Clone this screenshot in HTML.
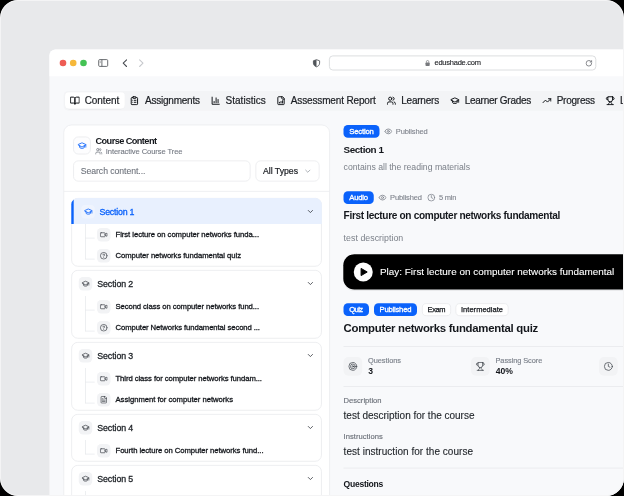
<!DOCTYPE html>
<html lang="en"><head><meta charset="utf-8"><title>Edushade course content</title><style>
html,body{margin:0;padding:0;background:#000;}
body{width:624px;height:496px;overflow:hidden;font-family:"Liberation Sans",sans-serif;}
.a{position:absolute;display:block}
.t{position:absolute;white-space:nowrap;line-height:0;}
#f{position:relative;will-change:transform;width:624px;height:496px;overflow:hidden;border-radius:18px;background:#e8e9eb;}
</style></head>
<body>
<div id="f">
<svg class="a" style="left:0;top:0" width="624" height="496" viewBox="0 0 624 496">
<path d="M49.4 500V55.5a6 6 0 0 1 6-6H640V500z" fill="#f8f9fb"/>
<path d="M49.4 76.2V55.5a6 6 0 0 1 6-6H640V76.2z" fill="#fff"/>
<circle cx="63.0" cy="63" r="3.3" fill="#ee5c54"/>
<circle cx="73.2" cy="63" r="3.3" fill="#f6b83a"/>
<circle cx="83.5" cy="63" r="3.3" fill="#44c254"/>
<g fill="none" stroke="#505459" stroke-width="0.85"><rect x="98.7" y="59.6" width="9" height="6.8" rx="1"/><path d="M101.9 59.6v6.8"/><path d="M99.7 61.3h1.1M99.7 62.6h1.1" stroke-width="0.5"/></g>
<path d="M126.6 59.9 123.2 63.2l3.4 3.3" fill="none" stroke="#45494f" stroke-width="1.05" stroke-linecap="round" stroke-linejoin="round"/>
<path d="M139.6 59.9 143 63.2l-3.4 3.3" fill="none" stroke="#c6c8cc" stroke-width="1.05" stroke-linecap="round" stroke-linejoin="round"/>
<g transform="translate(312.9,59.2)"><path d="M3.6 0.5 6.7 1.6v2.3c0 1.9-1.3 3.1-3.1 3.7C1.8 7 0.5 5.8 0.5 3.9V1.6z" fill="none" stroke="#505459" stroke-width="0.85"/><path d="M3.6 0.5v7.1C1.8 7 0.5 5.8 0.5 3.9V1.6z" fill="#505459"/></g>
<rect x="329.40" y="55.90" width="266.40" height="14.10" rx="3.40" fill="#fff" stroke="#d3d5d8" stroke-width="0.8"/>
<g transform="translate(425.4,59.9)"><rect x="0.1" y="2.6" width="4.2" height="3.5" rx="0.7" fill="#77797d"/><path d="M1 2.8V1.8a1.2 1.2 0 0 1 2.4 0v1" fill="none" stroke="#77797d" stroke-width="0.7"/></g>
<svg x="585.2" y="59.6" width="7.4" height="7.4" viewBox="0 0 24 24" fill="none" stroke="#63666b" stroke-width="2.4" stroke-linecap="round" stroke-linejoin="round"><path d="M21 12a9 9 0 1 1-9-9c2.5 0 4.9 1 6.7 2.7L21 8"/><path d="M21 3v5h-5"/></svg>
<rect x="63.60" y="90.90" width="576.40" height="19.80" rx="5" fill="#f3f4f6"/>
<rect x="64.90" y="92.60" width="60.00" height="16.80" rx="4.5" fill="rgba(0,0,0,.05)"/>
<rect x="65.00" y="92.20" width="59.80" height="16.60" rx="4" fill="#fff"/>
<svg x="70.15" y="95.95" width="9.5" height="9.5" viewBox="0 0 24 24" fill="none" stroke="#111418" stroke-width="2.5" stroke-linecap="round" stroke-linejoin="round"><path d="M2 3h6a4 4 0 0 1 4 4v14a3 3 0 0 0-3-3H2z"/><path d="M22 3h-6a4 4 0 0 0-4 4v14a3 3 0 0 1 3-3h7z"/></svg>
<svg x="129.65" y="95.95" width="9.5" height="9.5" viewBox="0 0 24 24" fill="none" stroke="#111418" stroke-width="2.5" stroke-linecap="round" stroke-linejoin="round"><rect width="8" height="4" x="8" y="2" rx="1" ry="1"/><path d="M16 4h2a2 2 0 0 1 2 2v14a2 2 0 0 1-2 2H6a2 2 0 0 1-2-2V6a2 2 0 0 1 2-2h2"/><path d="M12 11h4"/><path d="M12 16h4"/><path d="M8 11h.01"/><path d="M8 16h.01"/></svg>
<svg x="210.95" y="95.95" width="9.5" height="9.5" viewBox="0 0 24 24" fill="none" stroke="#111418" stroke-width="2.5" stroke-linecap="round" stroke-linejoin="round"><path d="M3 3v18h18"/><path d="M18 17V9"/><path d="M13 17V5"/><path d="M8 17v-3"/></svg>
<svg x="276.25" y="95.95" width="9.5" height="9.5" viewBox="0 0 24 24" fill="none" stroke="#111418" stroke-width="2.5" stroke-linecap="round" stroke-linejoin="round"><path d="M15 2H6a2 2 0 0 0-2 2v16a2 2 0 0 0 2 2h12a2 2 0 0 0 2-2V7Z"/><path d="M14 2v4a2 2 0 0 0 2 2h4"/><path d="M8 18v-2"/><path d="M12 18v-4"/><path d="M16 18v-6"/></svg>
<svg x="386.65" y="95.95" width="9.5" height="9.5" viewBox="0 0 24 24" fill="none" stroke="#111418" stroke-width="2.5" stroke-linecap="round" stroke-linejoin="round"><path d="M16 21v-2a4 4 0 0 0-4-4H6a4 4 0 0 0-4 4v2"/><circle cx="9" cy="7" r="4"/><path d="M22 21v-2a4 4 0 0 0-3-3.87"/><path d="M16 3.13a4 4 0 0 1 0 7.75"/></svg>
<svg x="450.05" y="95.95" width="9.5" height="9.5" viewBox="0 0 24 24" fill="none" stroke="#111418" stroke-width="2.5" stroke-linecap="round" stroke-linejoin="round"><path d="M21.42 10.922a1 1 0 0 0-.019-1.838L12.83 5.18a2 2 0 0 0-1.66 0L2.6 9.08a1 1 0 0 0 0 1.832l8.57 3.908a2 2 0 0 0 1.66 0z"/><path d="M22 10v6"/><path d="M6 12.5V16a6 3 0 0 0 12 0v-3.5"/></svg>
<svg x="542.15" y="95.95" width="9.5" height="9.5" viewBox="0 0 24 24" fill="none" stroke="#111418" stroke-width="2.5" stroke-linecap="round" stroke-linejoin="round"><polyline points="22 7 13.5 15.5 8.5 10.5 2 17"/><polyline points="16 7 22 7 22 13"/></svg>
<svg x="605.45" y="95.95" width="9.5" height="9.5" viewBox="0 0 24 24" fill="none" stroke="#111418" stroke-width="2.5" stroke-linecap="round" stroke-linejoin="round"><path d="M6 9H4.5a2.5 2.5 0 0 1 0-5H6"/><path d="M18 9h1.5a2.5 2.5 0 0 0 0-5H18"/><path d="M4 22h16"/><path d="M10 14.66V17c0 .55-.47.98-.97 1.21C7.85 18.75 7 20.24 7 22"/><path d="M14 14.66V17c0 .55.47.98.97 1.21C16.15 18.75 17 20.24 17 22"/><path d="M18 2H6v7a6 6 0 0 0 12 0V2Z"/></svg>
<rect x="63.75" y="125.00" width="265.80" height="394.65" rx="7.65" fill="#fff" stroke="#e8eaed" stroke-width="0.7"/>
<rect x="73.55" y="136.95" width="16.90" height="17.10" rx="4.65" fill="#fdfdfe" stroke="#e5e7ea" stroke-width="0.7"/>
<svg x="77.30" y="140.90" width="9.4" height="9.4" viewBox="0 0 24 24" fill="none" stroke="#0a62fb" stroke-width="2.2" stroke-linecap="round" stroke-linejoin="round"><path d="M21.42 10.922a1 1 0 0 0-.019-1.838L12.83 5.18a2 2 0 0 0-1.66 0L2.6 9.08a1 1 0 0 0 0 1.832l8.57 3.908a2 2 0 0 0 1.66 0z"/><path d="M22 10v6"/><path d="M6 12.5V16a6 3 0 0 0 12 0v-3.5"/></svg>
<svg x="95.10" y="147.50" width="7.4" height="7.4" viewBox="0 0 24 24" fill="none" stroke="#737881" stroke-width="2.4" stroke-linecap="round" stroke-linejoin="round"><path d="M16 21v-2a4 4 0 0 0-4-4H6a4 4 0 0 0-4 4v2"/><circle cx="9" cy="7" r="4"/><path d="M22 21v-2a4 4 0 0 0-3-3.87"/><path d="M16 3.13a4 4 0 0 1 0 7.75"/></svg>
<rect x="73.55" y="160.85" width="176.60" height="20.30" rx="4.65" fill="#fff" stroke="#e5e7ea" stroke-width="0.7"/>
<rect x="255.85" y="160.85" width="63.30" height="20.30" rx="4.65" fill="#fff" stroke="#e5e7ea" stroke-width="0.7"/>
<svg x="303.55" y="166.95" width="8.5" height="8.5" viewBox="0 0 24 24" fill="none" stroke="#8b9099" stroke-width="2" stroke-linecap="round" stroke-linejoin="round"><path d="m6 9 6 6 6-6"/></svg>
<rect x="63.80" y="190.90" width="265.70" height="0.70" rx="0" fill="#e8eaed"/>
<rect x="71.65" y="198.35" width="249.80" height="67.90" rx="6.15" fill="#fff" stroke="#e5e7ea" stroke-width="0.7"/>
<path d="M71.3 224V204.5a6.5 6.5 0 0 1 6.5-6.5H315.3a6.5 6.5 0 0 1 6.5 6.5V224z" fill="#e8f0fe"/>
<path d="M71.3 224V204.5a6.5 6.5 0 0 1 2.4-5v24.5z" fill="#0a62fb"/>
<rect x="81.20" y="204.90" width="13.60" height="13.60" rx="4" fill="rgba(255,255,255,.3)"/>
<svg x="83.85" y="207.15" width="8.9" height="8.9" viewBox="0 0 24 24" fill="none" stroke="#0a62fb" stroke-width="2.2" stroke-linecap="round" stroke-linejoin="round"><path d="M21.42 10.922a1 1 0 0 0-.019-1.838L12.83 5.18a2 2 0 0 0-1.66 0L2.6 9.08a1 1 0 0 0 0 1.832l8.57 3.908a2 2 0 0 0 1.66 0z"/><path d="M22 10v6"/><path d="M6 12.5V16a6 3 0 0 0 12 0v-3.5"/></svg>
<svg x="306.15" y="207.25" width="8.5" height="8.5" viewBox="0 0 24 24" fill="none" stroke="#30343a" stroke-width="2.2" stroke-linecap="round" stroke-linejoin="round"><path d="m6 9 6 6 6-6"/></svg>
<rect x="85.20" y="224.00" width="0.65" height="35.35" rx="0" fill="#e4e6ea"/>
<rect x="85.20" y="237.75" width="9.50" height="0.65" rx="0" fill="#e4e6ea"/>
<rect x="97.00" y="228.00" width="13.50" height="13.50" rx="4.2" fill="#f2f3f5"/>
<svg x="99.75" y="230.75" width="8" height="8" viewBox="0 0 24 24" fill="none" stroke="#3f444b" stroke-width="2.1" stroke-linecap="round" stroke-linejoin="round"><path d="m16 13 5.223 3.482a.5.5 0 0 0 .777-.416V7.87a.5.5 0 0 0-.752-.432L16 10.5"/><rect x="2" y="6" width="14" height="12" rx="2"/></svg>
<rect x="85.20" y="258.75" width="9.50" height="0.65" rx="0" fill="#e4e6ea"/>
<rect x="97.00" y="249.00" width="13.50" height="13.50" rx="4.2" fill="#f2f3f5"/>
<svg x="99.75" y="251.75" width="8" height="8" viewBox="0 0 24 24" fill="none" stroke="#3f444b" stroke-width="2.1" stroke-linecap="round" stroke-linejoin="round"><circle cx="12" cy="12" r="10"/><path d="M9.09 9a3 3 0 0 1 5.83 1c0 2-3 3-3 3"/><path d="M12 17h.01"/></svg>
<rect x="71.65" y="270.35" width="249.80" height="67.90" rx="6.15" fill="#fff" stroke="#e5e7ea" stroke-width="0.7"/>
<rect x="78.75" y="276.95" width="13.50" height="13.50" rx="4.2" fill="#f2f3f5"/>
<svg x="81.35" y="279.55" width="8.3" height="8.3" viewBox="0 0 24 24" fill="none" stroke="#3a3e45" stroke-width="2.1" stroke-linecap="round" stroke-linejoin="round"><path d="M21.42 10.922a1 1 0 0 0-.019-1.838L12.83 5.18a2 2 0 0 0-1.66 0L2.6 9.08a1 1 0 0 0 0 1.832l8.57 3.908a2 2 0 0 0 1.66 0z"/><path d="M22 10v6"/><path d="M6 12.5V16a6 3 0 0 0 12 0v-3.5"/></svg>
<svg x="306.15" y="279.25" width="8.5" height="8.5" viewBox="0 0 24 24" fill="none" stroke="#30343a" stroke-width="2.2" stroke-linecap="round" stroke-linejoin="round"><path d="m6 9 6 6 6-6"/></svg>
<rect x="85.20" y="296.00" width="0.65" height="35.35" rx="0" fill="#e4e6ea"/>
<rect x="85.20" y="309.75" width="9.50" height="0.65" rx="0" fill="#e4e6ea"/>
<rect x="97.00" y="300.00" width="13.50" height="13.50" rx="4.2" fill="#f2f3f5"/>
<svg x="99.75" y="302.75" width="8" height="8" viewBox="0 0 24 24" fill="none" stroke="#3f444b" stroke-width="2.1" stroke-linecap="round" stroke-linejoin="round"><path d="m16 13 5.223 3.482a.5.5 0 0 0 .777-.416V7.87a.5.5 0 0 0-.752-.432L16 10.5"/><rect x="2" y="6" width="14" height="12" rx="2"/></svg>
<rect x="85.20" y="330.75" width="9.50" height="0.65" rx="0" fill="#e4e6ea"/>
<rect x="97.00" y="321.00" width="13.50" height="13.50" rx="4.2" fill="#f2f3f5"/>
<svg x="99.75" y="323.75" width="8" height="8" viewBox="0 0 24 24" fill="none" stroke="#3f444b" stroke-width="2.1" stroke-linecap="round" stroke-linejoin="round"><circle cx="12" cy="12" r="10"/><path d="M9.09 9a3 3 0 0 1 5.83 1c0 2-3 3-3 3"/><path d="M12 17h.01"/></svg>
<rect x="71.65" y="342.35" width="249.80" height="67.90" rx="6.15" fill="#fff" stroke="#e5e7ea" stroke-width="0.7"/>
<rect x="78.75" y="348.95" width="13.50" height="13.50" rx="4.2" fill="#f2f3f5"/>
<svg x="81.35" y="351.55" width="8.3" height="8.3" viewBox="0 0 24 24" fill="none" stroke="#3a3e45" stroke-width="2.1" stroke-linecap="round" stroke-linejoin="round"><path d="M21.42 10.922a1 1 0 0 0-.019-1.838L12.83 5.18a2 2 0 0 0-1.66 0L2.6 9.08a1 1 0 0 0 0 1.832l8.57 3.908a2 2 0 0 0 1.66 0z"/><path d="M22 10v6"/><path d="M6 12.5V16a6 3 0 0 0 12 0v-3.5"/></svg>
<svg x="306.15" y="351.25" width="8.5" height="8.5" viewBox="0 0 24 24" fill="none" stroke="#30343a" stroke-width="2.2" stroke-linecap="round" stroke-linejoin="round"><path d="m6 9 6 6 6-6"/></svg>
<rect x="85.20" y="368.00" width="0.65" height="35.35" rx="0" fill="#e4e6ea"/>
<rect x="85.20" y="381.75" width="9.50" height="0.65" rx="0" fill="#e4e6ea"/>
<rect x="97.00" y="372.00" width="13.50" height="13.50" rx="4.2" fill="#f2f3f5"/>
<svg x="99.75" y="374.75" width="8" height="8" viewBox="0 0 24 24" fill="none" stroke="#3f444b" stroke-width="2.1" stroke-linecap="round" stroke-linejoin="round"><path d="m16 13 5.223 3.482a.5.5 0 0 0 .777-.416V7.87a.5.5 0 0 0-.752-.432L16 10.5"/><rect x="2" y="6" width="14" height="12" rx="2"/></svg>
<rect x="85.20" y="402.75" width="9.50" height="0.65" rx="0" fill="#e4e6ea"/>
<rect x="97.00" y="393.00" width="13.50" height="13.50" rx="4.2" fill="#f2f3f5"/>
<svg x="99.75" y="395.75" width="8" height="8" viewBox="0 0 24 24" fill="none" stroke="#3f444b" stroke-width="2.1" stroke-linecap="round" stroke-linejoin="round"><path d="M15 2H6a2 2 0 0 0-2 2v16a2 2 0 0 0 2 2h12a2 2 0 0 0 2-2V7Z"/><path d="M14 2v4a2 2 0 0 0 2 2h4"/><path d="M10 9H8"/><path d="M16 13H8"/><path d="M16 17H8"/></svg>
<rect x="71.65" y="414.35" width="249.80" height="46.90" rx="6.15" fill="#fff" stroke="#e5e7ea" stroke-width="0.7"/>
<rect x="78.75" y="420.95" width="13.50" height="13.50" rx="4.2" fill="#f2f3f5"/>
<svg x="81.35" y="423.55" width="8.3" height="8.3" viewBox="0 0 24 24" fill="none" stroke="#3a3e45" stroke-width="2.1" stroke-linecap="round" stroke-linejoin="round"><path d="M21.42 10.922a1 1 0 0 0-.019-1.838L12.83 5.18a2 2 0 0 0-1.66 0L2.6 9.08a1 1 0 0 0 0 1.832l8.57 3.908a2 2 0 0 0 1.66 0z"/><path d="M22 10v6"/><path d="M6 12.5V16a6 3 0 0 0 12 0v-3.5"/></svg>
<svg x="306.15" y="423.25" width="8.5" height="8.5" viewBox="0 0 24 24" fill="none" stroke="#30343a" stroke-width="2.2" stroke-linecap="round" stroke-linejoin="round"><path d="m6 9 6 6 6-6"/></svg>
<rect x="85.20" y="440.00" width="0.65" height="14.35" rx="0" fill="#e4e6ea"/>
<rect x="85.20" y="453.75" width="9.50" height="0.65" rx="0" fill="#e4e6ea"/>
<rect x="97.00" y="444.00" width="13.50" height="13.50" rx="4.2" fill="#f2f3f5"/>
<svg x="99.75" y="446.75" width="8" height="8" viewBox="0 0 24 24" fill="none" stroke="#3f444b" stroke-width="2.1" stroke-linecap="round" stroke-linejoin="round"><path d="m16 13 5.223 3.482a.5.5 0 0 0 .777-.416V7.87a.5.5 0 0 0-.752-.432L16 10.5"/><rect x="2" y="6" width="14" height="12" rx="2"/></svg>
<rect x="71.65" y="465.35" width="249.80" height="67.90" rx="6.15" fill="#fff" stroke="#e5e7ea" stroke-width="0.7"/>
<rect x="78.75" y="471.95" width="13.50" height="13.50" rx="4.2" fill="#f2f3f5"/>
<svg x="81.35" y="474.55" width="8.3" height="8.3" viewBox="0 0 24 24" fill="none" stroke="#3a3e45" stroke-width="2.1" stroke-linecap="round" stroke-linejoin="round"><path d="M21.42 10.922a1 1 0 0 0-.019-1.838L12.83 5.18a2 2 0 0 0-1.66 0L2.6 9.08a1 1 0 0 0 0 1.832l8.57 3.908a2 2 0 0 0 1.66 0z"/><path d="M22 10v6"/><path d="M6 12.5V16a6 3 0 0 0 12 0v-3.5"/></svg>
<svg x="306.15" y="474.25" width="8.5" height="8.5" viewBox="0 0 24 24" fill="none" stroke="#30343a" stroke-width="2.2" stroke-linecap="round" stroke-linejoin="round"><path d="m6 9 6 6 6-6"/></svg>
<rect x="85.20" y="491.00" width="0.65" height="35.35" rx="0" fill="#e4e6ea"/>
<rect x="85.20" y="504.75" width="9.50" height="0.65" rx="0" fill="#e4e6ea"/>
<rect x="97.00" y="495.00" width="13.50" height="13.50" rx="4.2" fill="#f2f3f5"/>
<svg x="99.75" y="497.75" width="8" height="8" viewBox="0 0 24 24" fill="none" stroke="#3f444b" stroke-width="2.1" stroke-linecap="round" stroke-linejoin="round"><path d="m16 13 5.223 3.482a.5.5 0 0 0 .777-.416V7.87a.5.5 0 0 0-.752-.432L16 10.5"/><rect x="2" y="6" width="14" height="12" rx="2"/></svg>
<rect x="85.20" y="525.75" width="9.50" height="0.65" rx="0" fill="#e4e6ea"/>
<rect x="97.00" y="516.00" width="13.50" height="13.50" rx="4.2" fill="#f2f3f5"/>
<svg x="99.75" y="518.75" width="8" height="8" viewBox="0 0 24 24" fill="none" stroke="#3f444b" stroke-width="2.1" stroke-linecap="round" stroke-linejoin="round"><circle cx="12" cy="12" r="10"/><path d="M9.09 9a3 3 0 0 1 5.83 1c0 2-3 3-3 3"/><path d="M12 17h.01"/></svg>
<rect x="343.50" y="125.00" width="36.00" height="12.80" rx="4.4" fill="#0a62fb"/>
<svg x="384.20" y="127.30" width="8.2" height="8.2" viewBox="0 0 24 24" fill="none" stroke="#7a7f88" stroke-width="2.3" stroke-linecap="round" stroke-linejoin="round"><path d="M2.062 12.348a1 1 0 0 1 0-.696 10.75 10.75 0 0 1 19.876 0 1 1 0 0 1 0 .696 10.75 10.75 0 0 1-19.876 0"/><circle cx="12" cy="12" r="3"/></svg>
<rect x="343.50" y="191.25" width="30.25" height="12.80" rx="4.4" fill="#0a62fb"/>
<svg x="378.40" y="193.50" width="8.2" height="8.2" viewBox="0 0 24 24" fill="none" stroke="#7a7f88" stroke-width="2.3" stroke-linecap="round" stroke-linejoin="round"><path d="M2.062 12.348a1 1 0 0 1 0-.696 10.75 10.75 0 0 1 19.876 0 1 1 0 0 1 0 .696 10.75 10.75 0 0 1-19.876 0"/><circle cx="12" cy="12" r="3"/></svg>
<svg x="427.20" y="193.50" width="8.2" height="8.2" viewBox="0 0 24 24" fill="none" stroke="#7a7f88" stroke-width="2.2" stroke-linecap="round" stroke-linejoin="round"><circle cx="12" cy="12" r="10"/><polyline points="12 6 12 12 16 14"/></svg>
<rect x="343.30" y="255.30" width="296.70" height="35.70" rx="11" fill="rgba(0,0,0,.06)"/>
<rect x="343.30" y="254.30" width="296.70" height="35.10" rx="11" fill="#000"/>
<circle cx="363.25" cy="272" r="9.5" fill="#fff"/>
<path d="M361.1 268.4 367.2 272 361.1 275.6z" fill="#000" stroke="#000" stroke-width="1" stroke-linejoin="round"/>
<rect x="343.50" y="303.25" width="25.50" height="12.80" rx="4.4" fill="#0a62fb"/>
<rect x="374.00" y="303.25" width="43.00" height="12.80" rx="4.4" fill="#0a62fb"/>
<rect x="422.35" y="303.60" width="28.30" height="12.10" rx="4.05" fill="#fff" stroke="#e5e7ea" stroke-width="0.7"/>
<rect x="455.85" y="303.60" width="52.30" height="12.10" rx="4.05" fill="#fff" stroke="#e5e7ea" stroke-width="0.7"/>
<rect x="343.50" y="346.00" width="296.50" height="0.70" rx="0" fill="#e5e7ea"/>
<rect x="343.50" y="386.00" width="296.50" height="0.70" rx="0" fill="#e5e7ea"/>
<rect x="343.50" y="357.00" width="18.70" height="18.75" rx="5" fill="#f2f3f5"/>
<svg x="348.10" y="361.65" width="9.5" height="9.5" viewBox="0 0 24 24" fill="none" stroke="#3a3f46" stroke-width="1.8" stroke-linecap="round" stroke-linejoin="round"><circle cx="12" cy="12" r="10"/><circle cx="12" cy="12" r="6"/><circle cx="12" cy="12" r="2"/></svg>
<rect x="471.00" y="357.00" width="18.70" height="18.75" rx="5" fill="#f2f3f5"/>
<svg x="475.60" y="361.65" width="9.5" height="9.5" viewBox="0 0 24 24" fill="none" stroke="#3a3f46" stroke-width="1.8" stroke-linecap="round" stroke-linejoin="round"><path d="M6 9H4.5a2.5 2.5 0 0 1 0-5H6"/><path d="M18 9h1.5a2.5 2.5 0 0 0 0-5H18"/><path d="M4 22h16"/><path d="M10 14.66V17c0 .55-.47.98-.97 1.21C7.85 18.75 7 20.24 7 22"/><path d="M14 14.66V17c0 .55.47.98.97 1.21C16.15 18.75 17 20.24 17 22"/><path d="M18 2H6v7a6 6 0 0 0 12 0V2Z"/></svg>
<rect x="599.00" y="357.00" width="18.70" height="18.75" rx="5" fill="#f2f3f5"/>
<svg x="603.60" y="361.65" width="9.5" height="9.5" viewBox="0 0 24 24" fill="none" stroke="#3a3f46" stroke-width="1.8" stroke-linecap="round" stroke-linejoin="round"><circle cx="12" cy="12" r="10"/><polyline points="12 6 12 12 16 14"/></svg>
<rect x="343.50" y="467.70" width="296.50" height="0.70" rx="0" fill="#e5e7ea"/>
</svg>
<span class="t" style="left:434.50px;top:63.41px;font-size:7.5px;color:#232529;letter-spacing:-0.246px;-webkit-text-stroke:0.12px #232529;">edushade.com</span>
<span class="t" style="left:84.70px;top:101.30px;font-size:10px;color:#1a1d22;letter-spacing:-0.089px;-webkit-text-stroke:0.2px #1a1d22;">Content</span>
<span class="t" style="left:145.00px;top:101.30px;font-size:10px;color:#1a1d22;letter-spacing:-0.225px;-webkit-text-stroke:0.2px #1a1d22;">Assignments</span>
<span class="t" style="left:225.50px;top:101.30px;font-size:10px;color:#1a1d22;letter-spacing:0.032px;-webkit-text-stroke:0.2px #1a1d22;">Statistics</span>
<span class="t" style="left:290.80px;top:101.30px;font-size:10px;color:#1a1d22;letter-spacing:-0.145px;-webkit-text-stroke:0.2px #1a1d22;">Assessment Report</span>
<span class="t" style="left:401.20px;top:101.30px;font-size:10px;color:#1a1d22;letter-spacing:-0.210px;-webkit-text-stroke:0.2px #1a1d22;">Learners</span>
<span class="t" style="left:464.70px;top:101.30px;font-size:10px;color:#1a1d22;letter-spacing:-0.265px;-webkit-text-stroke:0.2px #1a1d22;">Learner Grades</span>
<span class="t" style="left:556.70px;top:101.30px;font-size:10px;color:#1a1d22;letter-spacing:-0.245px;-webkit-text-stroke:0.2px #1a1d22;">Progress</span>
<span class="t" style="left:620.00px;top:101.30px;font-size:10px;color:#1a1d22;-webkit-text-stroke:0.2px #1a1d22;">Learning</span>
<span class="t" style="left:95.50px;top:141.30px;font-size:9.2px;color:#14171c;font-weight:700;letter-spacing:-0.570px;">Course Content</span>
<span class="t" style="left:105.75px;top:151.91px;font-size:7.6px;color:#737881;letter-spacing:-0.099px;-webkit-text-stroke:0.1px #737881;">Interactive Course Tree</span>
<span class="t" style="left:80.75px;top:170.91px;font-size:8.7px;color:#6e737c;letter-spacing:-0.059px;-webkit-text-stroke:0.1px #6e737c;">Search content...</span>
<span class="t" style="left:263.00px;top:170.91px;font-size:8.7px;color:#1a1d22;letter-spacing:-0.012px;-webkit-text-stroke:0.2px #1a1d22;">All Types</span>
<span class="t" style="left:99.50px;top:211.80px;font-size:8.8px;color:#0a62fb;letter-spacing:-0.211px;-webkit-text-stroke:0.3px #0a62fb;">Section 1</span>
<span class="t" style="left:115.50px;top:235.46px;font-size:7.7px;color:#14171c;letter-spacing:-0.052px;-webkit-text-stroke:0.3px #14171c;">First lecture on computer networks funda...</span>
<span class="t" style="left:115.50px;top:256.46px;font-size:7.7px;color:#14171c;letter-spacing:-0.056px;-webkit-text-stroke:0.3px #14171c;">Computer networks fundamental quiz</span>
<span class="t" style="left:97.25px;top:283.80px;font-size:8.8px;color:#1f2328;letter-spacing:-0.086px;-webkit-text-stroke:0.3px #1f2328;">Section 2</span>
<span class="t" style="left:115.50px;top:307.46px;font-size:7.7px;color:#14171c;letter-spacing:-0.087px;-webkit-text-stroke:0.3px #14171c;">Second class on computer networks fund...</span>
<span class="t" style="left:115.50px;top:328.46px;font-size:7.7px;color:#14171c;letter-spacing:-0.086px;-webkit-text-stroke:0.3px #14171c;">Computer Networks fundamental second ...</span>
<span class="t" style="left:97.25px;top:355.80px;font-size:8.8px;color:#1f2328;letter-spacing:-0.086px;-webkit-text-stroke:0.3px #1f2328;">Section 3</span>
<span class="t" style="left:115.50px;top:379.46px;font-size:7.7px;color:#14171c;letter-spacing:-0.073px;-webkit-text-stroke:0.3px #14171c;">Third class for computer networks fundam...</span>
<span class="t" style="left:115.50px;top:400.46px;font-size:7.7px;color:#14171c;letter-spacing:-0.028px;-webkit-text-stroke:0.3px #14171c;">Assignment for computer networks</span>
<span class="t" style="left:97.25px;top:427.80px;font-size:8.8px;color:#1f2328;letter-spacing:-0.086px;-webkit-text-stroke:0.3px #1f2328;">Section 4</span>
<span class="t" style="left:115.50px;top:451.46px;font-size:7.7px;color:#14171c;letter-spacing:-0.057px;-webkit-text-stroke:0.3px #14171c;">Fourth lecture on Computer networks fund...</span>
<span class="t" style="left:97.25px;top:478.80px;font-size:8.8px;color:#1f2328;letter-spacing:-0.086px;-webkit-text-stroke:0.3px #1f2328;">Section 5</span>
<span class="t" style="left:115.50px;top:502.46px;font-size:7.7px;color:#14171c;letter-spacing:-0.013px;-webkit-text-stroke:0.3px #14171c;">Fifth lecture on computer networks</span>
<span class="t" style="left:115.50px;top:523.46px;font-size:7.7px;color:#14171c;letter-spacing:0.219px;-webkit-text-stroke:0.3px #14171c;">Second quiz</span>
<span class="t" style="left:349.30px;top:132.21px;font-size:7.7px;color:#fff;letter-spacing:-0.193px;-webkit-text-stroke:0.3px #fff;">Section</span>
<span class="t" style="left:395.75px;top:132.11px;font-size:7.5px;color:#80858e;letter-spacing:-0.119px;-webkit-text-stroke:0.12px #80858e;">Published</span>
<span class="t" style="left:343.60px;top:150.21px;font-size:9.9px;color:#14171c;font-weight:700;letter-spacing:-0.438px;">Section 1</span>
<span class="t" style="left:343.60px;top:167.00px;font-size:8.7px;color:#7b8089;letter-spacing:-0.019px;">contains all the reading materials</span>
<span class="t" style="left:349.30px;top:198.41px;font-size:7.7px;color:#fff;letter-spacing:-0.243px;-webkit-text-stroke:0.3px #fff;">Audio</span>
<span class="t" style="left:390.00px;top:198.30px;font-size:7.5px;color:#80858e;letter-spacing:-0.119px;-webkit-text-stroke:0.12px #80858e;">Published</span>
<span class="t" style="left:439.00px;top:198.30px;font-size:7.5px;color:#80858e;letter-spacing:-0.211px;-webkit-text-stroke:0.12px #80858e;">5 min</span>
<span class="t" style="left:343.60px;top:216.21px;font-size:10.1px;color:#14171c;font-weight:700;letter-spacing:-0.333px;">First lecture on computer networks fundamental</span>
<span class="t" style="left:343.60px;top:237.71px;font-size:8.8px;color:#7b8089;letter-spacing:0.032px;">test description</span>
<span class="t" style="left:380.00px;top:272.00px;font-size:9.9px;color:#fff;letter-spacing:0.019px;-webkit-text-stroke:0.1px #fff;">Play: First lecture on computer networks fundamental</span>
<span class="t" style="left:349.20px;top:310.41px;font-size:7.7px;color:#fff;letter-spacing:-0.604px;-webkit-text-stroke:0.3px #fff;">Quiz</span>
<span class="t" style="left:379.50px;top:310.41px;font-size:7.7px;color:#fff;letter-spacing:-0.221px;-webkit-text-stroke:0.3px #fff;">Published</span>
<span class="t" style="left:427.60px;top:310.41px;font-size:7.5px;color:#14171c;letter-spacing:-0.457px;-webkit-text-stroke:0.25px #14171c;">Exam</span>
<span class="t" style="left:461.00px;top:310.41px;font-size:7.5px;color:#14171c;letter-spacing:0.027px;-webkit-text-stroke:0.25px #14171c;">Intermediate</span>
<span class="t" style="left:343.60px;top:328.30px;font-size:11.4px;color:#14171c;font-weight:700;letter-spacing:-0.277px;">Computer networks fundamental quiz</span>
<span class="t" style="left:368.00px;top:361.30px;font-size:7.4px;color:#7b808a;letter-spacing:-0.035px;-webkit-text-stroke:0.15px #7b808a;">Questions</span>
<span class="t" style="left:368.30px;top:371.41px;font-size:8.6px;color:#14171c;font-weight:700;">3</span>
<span class="t" style="left:495.50px;top:361.30px;font-size:7.4px;color:#7b808a;letter-spacing:-0.076px;-webkit-text-stroke:0.15px #7b808a;">Passing Score</span>
<span class="t" style="left:495.80px;top:371.41px;font-size:8.6px;color:#14171c;font-weight:700;letter-spacing:-0.002px;">40%</span>
<span class="t" style="left:623.50px;top:361.30px;font-size:7.4px;color:#7b808a;-webkit-text-stroke:0.15px #7b808a;">Time</span>
<span class="t" style="left:623.80px;top:371.41px;font-size:8.6px;color:#14171c;font-weight:700;">10</span>
<span class="t" style="left:343.60px;top:401.41px;font-size:7.6px;color:#6b7079;letter-spacing:-0.008px;-webkit-text-stroke:0.15px #6b7079;">Description</span>
<span class="t" style="left:343.60px;top:416.11px;font-size:10px;color:#1f2328;letter-spacing:-0.010px;-webkit-text-stroke:0.12px #1f2328;">test description for the course</span>
<span class="t" style="left:343.60px;top:437.11px;font-size:7.6px;color:#6b7079;letter-spacing:0.028px;-webkit-text-stroke:0.15px #6b7079;">Instructions</span>
<span class="t" style="left:343.60px;top:452.00px;font-size:10px;color:#1f2328;letter-spacing:0.033px;-webkit-text-stroke:0.12px #1f2328;">test instruction for the course</span>
<span class="t" style="left:343.60px;top:483.91px;font-size:8.6px;color:#14171c;font-weight:700;letter-spacing:-0.298px;">Questions</span>
<div class="a" style="left:0;top:0;width:622px;height:494px;border:1px solid #f4f4f5;border-radius:18px"></div>
</div>
</body></html>
